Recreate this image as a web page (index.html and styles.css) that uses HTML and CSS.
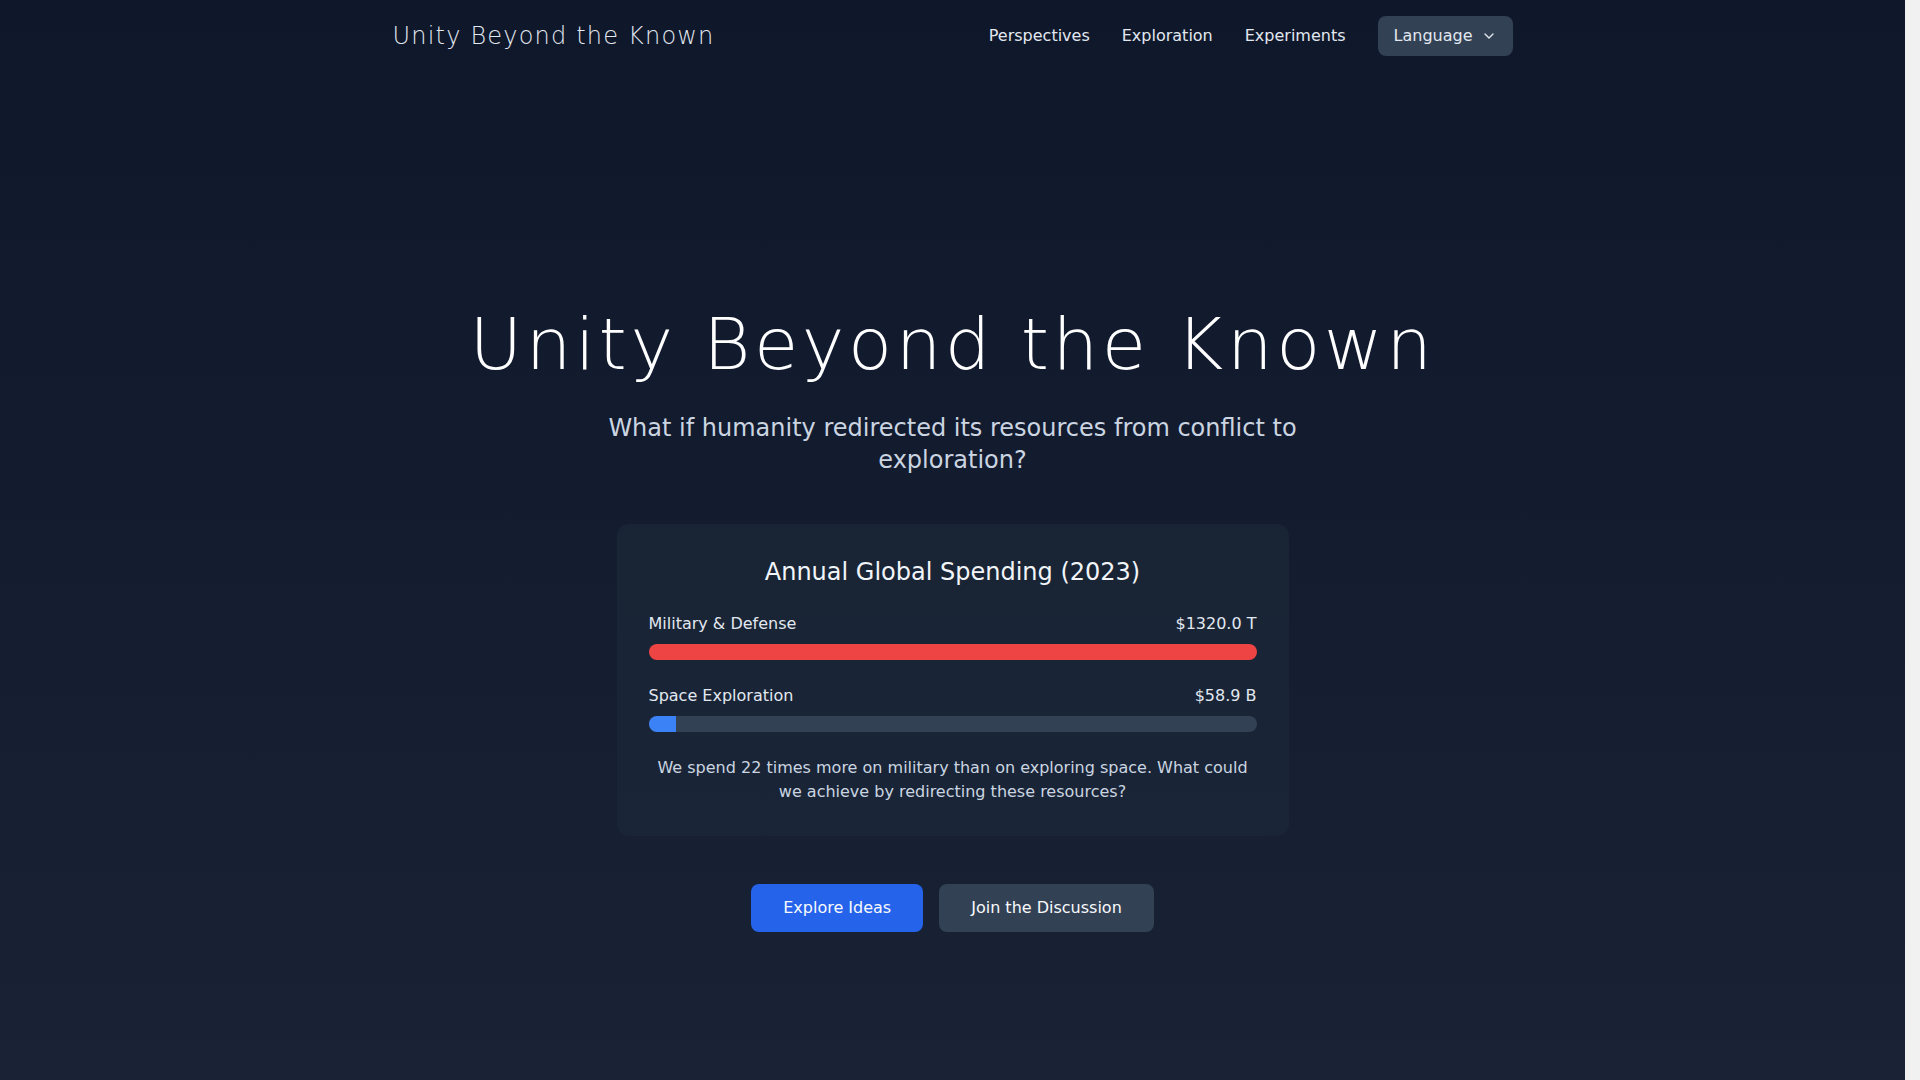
FILE: index.html
```html
<!DOCTYPE html>
<html lang="en">
<head>
  <meta charset="UTF-8" />
  <meta name="viewport" content="width=device-width, initial-scale=1.0" />
  <title>Unity Beyond the Known</title>
  <link rel="stylesheet" href="styles.css">
</head>

<body>
  <div class="page">
    <nav class="nav">
      <div class="nav-inner">
        <a href="#" class="logo">Unity Beyond the Known</a>
        <div class="nav-links">
          <a href="#perspectives">Perspectives</a>
          <a href="#exploration">Exploration</a>
          <a href="#experiments">Experiments</a>
          <button class="lang-btn">
            Language
            <svg width="16" height="16" viewBox="0 0 24 24" fill="none" stroke="currentColor" stroke-width="2" stroke-linecap="round" stroke-linejoin="round"><polyline points="6 9 12 15 18 9"></polyline></svg>
          </button>
        </div>
      </div>
    </nav>

    <section class="hero">
      <h1 class="hero-title">Unity Beyond the Known</h1>
      <p class="hero-sub">What if humanity redirected its resources from conflict to exploration?</p>

      <div class="card">
        <h2 class="card-title">Annual Global Spending (2023)</h2>

        <div class="stat">
          <div class="stat-row">
            <span>Military &amp; Defense</span>
            <span id="milValue"></span>
          </div>
          <div class="track"><div class="fill red" id="milBar"></div></div>
        </div>

        <div class="stat">
          <div class="stat-row">
            <span>Space Exploration</span>
            <span id="spaceValue"></span>
          </div>
          <div class="track"><div class="fill blue" id="spaceBar"></div></div>
        </div>

        <p class="card-note">We spend <span id="ratio"></span> times more on military than on exploring space. What could we achieve by redirecting these resources?</p>
      </div>

      <div class="actions">
        <a href="#perspectives" class="btn btn-primary">Explore Ideas</a>
        <a href="#experiments" class="btn btn-dark">Join the Discussion</a>
      </div>
    </section>

    <section id="perspectives" class="more"></section>
  </div>

  <script>
  // spending in billions
  const military = 1320;
  const space = 58.9;

  const milBar = document.getElementById("milBar");
  const spaceBar = document.getElementById("spaceBar");

  document.getElementById("milValue").textContent = `$${military.toFixed(1)} T`;
  document.getElementById("spaceValue").textContent = `$${space.toFixed(1)} B`;
  document.getElementById("ratio").textContent = Math.round(military / space);

  milBar.style.width = "100%";
  spaceBar.style.width = `${(space / military) * 100}%`;
</script>
</body>
</html>
```

FILE: styles.css
```css
* {
  margin: 0;
  padding: 0;
  box-sizing: border-box;
}

html {
  background: #f1f1f1;
}

body {
  margin-right: 15px;
  font-family: "DejaVu Sans", sans-serif;
  color: #f1f5f9;
}

a {
  color: inherit;
  text-decoration: none;
}

.page {
  background: linear-gradient(to bottom, #0f172a, #1e293b);
}

.nav-inner {
  max-width: 1152px;
  margin: 0 auto;
  padding: 16px;
  display: flex;
  justify-content: space-between;
  align-items: center;
}

.logo {
  font-size: 24px;
  line-height: 32px;
  font-weight: 300;
  letter-spacing: 0.05em;
  color: #e2e8f0;
}

.nav-links {
  display: flex;
  align-items: center;
  gap: 32px;
  font-size: 16px;
  line-height: 24px;
}

.nav-links a {
  color: #e2e8f0;
}

.lang-btn {
  display: flex;
  align-items: center;
  gap: 8px;
  padding: 8px 16px;
  border: none;
  border-radius: 8px;
  background: #334155;
  color: #e2e8f0;
  font-family: inherit;
  font-size: 16px;
  line-height: 24px;
}

.hero {
  padding: 236px 16px 0;
  min-height: 1080px;
  text-align: center;
}

.hero-title {
  font-size: 72px;
  line-height: 1;
  font-weight: 200;
  letter-spacing: 0.05em;
  color: #fff;
  margin-bottom: 32px;
}

.hero-sub {
  max-width: 768px;
  margin: 0 auto 48px;
  font-size: 24px;
  line-height: 32px;
  color: #cbd5e1;
}

.card {
  max-width: 672px;
  margin: 0 auto;
  padding: 32px;
  border-radius: 12px;
  background: rgba(30, 41, 59, 0.55);
}

.card-title {
  font-size: 24px;
  line-height: 32px;
  font-weight: 400;
  margin-bottom: 24px;
}

.stat {
  margin-bottom: 24px;
}

.stat-row {
  display: flex;
  justify-content: space-between;
  font-size: 16px;
  line-height: 24px;
  color: #e2e8f0;
  margin-bottom: 8px;
}

.track {
  height: 16px;
  border-radius: 9999px;
  background: #334155;
  overflow: hidden;
}

.fill {
  height: 100%;
}

.red {
  background: #ef4444;
}

.blue {
  background: #3b82f6;
}

.card-note {
  font-size: 16px;
  line-height: 24px;
  color: #cbd5e1;
}

.actions {
  margin-top: 48px;
  display: flex;
  justify-content: center;
  gap: 16px;
}

.btn {
  padding: 12px 32px;
  border-radius: 8px;
  font-size: 16px;
  line-height: 24px;
  color: #f8fafc;
}

.btn-primary {
  background: #2563eb;
}

.btn-dark {
  background: #334155;
}

.more {
  min-height: 508px;
}
```
